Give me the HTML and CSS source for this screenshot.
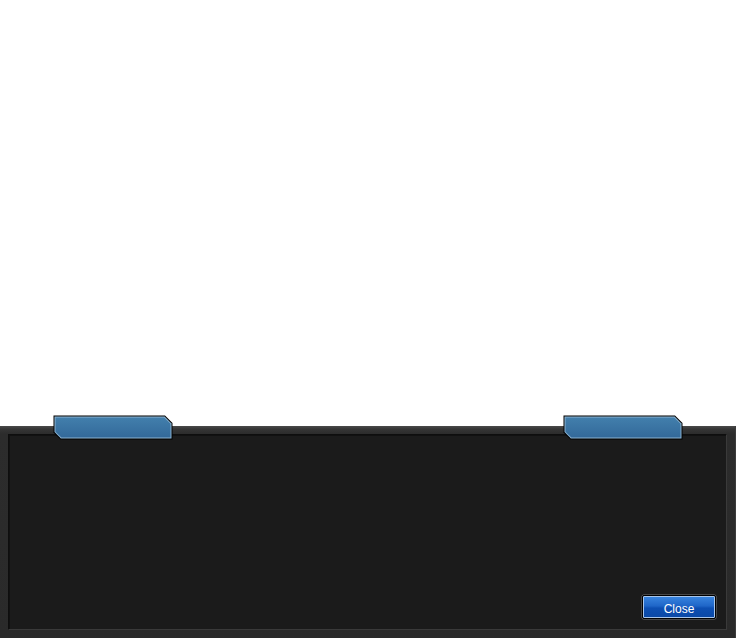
FILE: index.html
```html
<!DOCTYPE html>
<html>
<head>
<meta charset="utf-8">
<link rel="stylesheet" href="styles.css">
</head>
<body>
<div class="page">
  <div class="panel">
    <div class="tabs">
      <svg class="tab" width="120" height="25" viewBox="0 0 120 25">
        <defs>
          <linearGradient id="tg" x1="0" y1="0" x2="0" y2="1">
            <stop offset="0" stop-color="#427fac"/>
            <stop offset="1" stop-color="#33699a"/>
          </linearGradient>
        </defs>
        <polygon points="0.5,0.5 112,0.5 119.5,8 119.5,24.5 7.5,24.5 0.5,17.5" fill="#000"/>
        <polygon points="1.5,1.5 111.6,1.5 118.5,8.4 118.5,23.5 7.9,23.5 1.5,17.1" fill="#8cb3d2"/>
        <polygon points="2.5,2.5 111.2,2.5 117.5,8.8 117.5,22.5 8.3,22.5 2.5,16.7" fill="url(#tg)"/>
      </svg>
      <svg class="tab" width="120" height="25" viewBox="0 0 120 25">
        <polygon points="0.5,0.5 112,0.5 119.5,8 119.5,24.5 7.5,24.5 0.5,17.5" fill="#000"/>
        <polygon points="1.5,1.5 111.6,1.5 118.5,8.4 118.5,23.5 7.9,23.5 1.5,17.1" fill="#8cb3d2"/>
        <polygon points="2.5,2.5 111.2,2.5 117.5,8.8 117.5,22.5 8.3,22.5 2.5,16.7" fill="url(#tg)"/>
      </svg>
    </div>
    <div class="inner">
      <button class="close">Close</button>
    </div>
  </div>
</div>
</body>
</html>
```
FILE: styles.css
```css
html, body {
  margin: 0;
  padding: 0;
  background: #fff;
}
.page {
  width: 736px;
  height: 638px;
  display: flex;
  flex-direction: column;
  justify-content: flex-end;
}
.panel {
  position: relative;
  height: 212px;
  box-sizing: border-box;
  padding: 8px 8px 8px 8px;
  background: linear-gradient(#4a4a4a 0px, #353535 3px, #2c2c2c 8px, #2a2a2a 100%);
  border-right: 1px solid #3c3c3c;
  display: flex;
}
.tabs {
  position: absolute;
  top: -11px;
  left: 53px;
  width: 630px;
  display: flex;
  justify-content: space-between;
}
.tab {
  display: block;
}
.inner {
  flex: 1;
  background: #1b1b1b;
  border: 1px solid #0e0e0e;
  border-right-color: #3a3a3a;
  border-bottom-color: #3a3a3a;
  box-shadow: inset 1px 1px 0 #111;
  display: flex;
  align-items: flex-end;
  justify-content: flex-end;
  padding: 0 10px 10px 0;
}
.close {
  width: 74px;
  height: 24px;
  box-sizing: border-box;
  border: 1px solid #000;
  border-radius: 2px;
  box-shadow: inset 0 0 0 1px #a9c6ea, 0 0 0 0.5px #777;
  background: linear-gradient(#3a86e0 0%, #1f66c8 45%, #0d4fb2 55%, #0a48a6 100%);
  color: #fff;
  font-family: "Liberation Sans", Arial, sans-serif;
  font-size: 12px;
  padding: 3px 0 0 0;
  line-height: 18px;
  text-align: center;
  cursor: pointer;
}
```
